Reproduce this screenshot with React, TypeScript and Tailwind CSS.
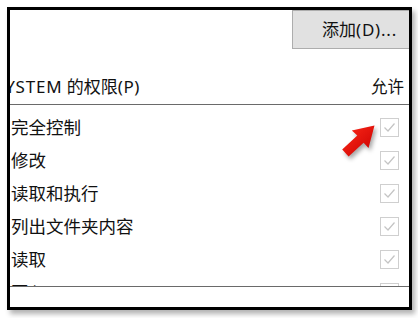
const rows = ["完全控制", "修改", "读取和执行", "列出文件夹内容", "读取", "写入"];

const font = {
  fontFamily: '"Noto Sans", "Noto Sans CJK SC", sans-serif',
};

const CheckBox = () => (
  <div className="w-[19px] h-[19px] border border-[#cfcfcf] bg-white flex items-center justify-center">
    <svg width="15" height="15" viewBox="0 0 15 15">
      <polyline
        points="2.5,7.5 6,11 12.5,3.5"
        fill="none"
        stroke="#c4c4c4"
        strokeWidth="1.2"
      />
    </svg>
  </div>
);

const RedArrow = () => (
  <svg
    className="absolute left-[336px] top-[118px] drop-shadow-[2px_3px_2px_rgba(0,0,0,0.35)]"
    width="48"
    height="48"
    viewBox="0 0 48 48"
  >
    <defs>
      <linearGradient id="ar" x1="0" y1="0" x2="1" y2="1">
        <stop offset="0" stopColor="#ff2a1a" />
        <stop offset="1" stopColor="#c80000" />
      </linearGradient>
    </defs>
    <polygon
      points="38.5,7.5 32.5,30 27.6,24.8 12.6,38.4 6.2,31.6 21.3,17.4 15.8,12.4"
      fill="url(#ar)"
    />
  </svg>
);

export default function App() {
  return (
    <div className="relative w-[418px] h-[318px] bg-white overflow-hidden" style={font}>
      <div className="ml-[7px] mt-[7px] w-[405px] h-[303px] border-[3px] border-black bg-white shadow-[3px_4px_5px_rgba(0,0,0,0.3)] flex flex-col overflow-hidden">
        <div className="flex justify-end">
          <div className="w-[117px] h-[39px] bg-[#e1e1e1] border border-[#adadad] border-r-0 flex items-center pl-[29px] text-[17px] text-[#111] whitespace-nowrap">
            添加<span className="tracking-[0.8px]">(D)...</span>
          </div>
        </div>
        <div className="h-[56px] flex items-end justify-between pb-[5px] border-b border-[#6a6a6a] text-[17px] text-[#111] leading-[24px]">
          <span className="ml-[-15px] whitespace-nowrap">
            <span className="tracking-[0.8px]">SYSTEM</span> 的权限<span className="tracking-[0.5px]">(P)</span>
          </span>
          <span className="mr-[5px] text-[16.5px]">允许</span>
        </div>
        <div className="h-[182px] pt-[6px] overflow-hidden border-b border-[#6a6a6a]">
          {rows.map((r) => (
            <div key={r} className="h-[33px] flex items-center justify-between pl-[1px] pr-[10px]">
              <span className="text-[17.5px] text-[#111] leading-none">{r}</span>
              <CheckBox />
            </div>
          ))}
        </div>
        <div className="flex-1" />
      </div>
      <RedArrow />
    </div>
  );
}
